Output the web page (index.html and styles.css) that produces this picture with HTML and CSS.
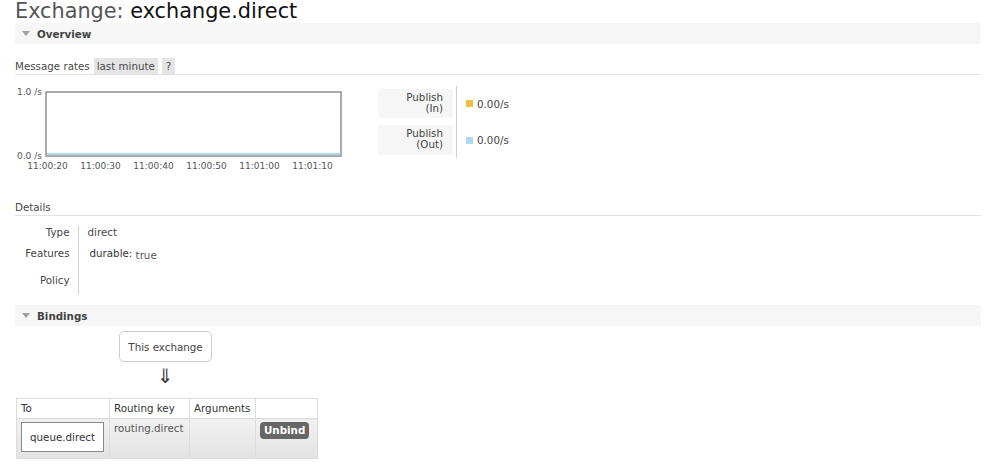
FILE: index.html
```html
<!DOCTYPE html>
<html lang="en">
<head>
<meta charset="utf-8">
<title>Exchange: exchange.direct</title>
<link rel="stylesheet" href="styles.css">
</head>
<body>
<h1 class="title">Exchange: <b>exchange.direct</b></h1>

<div class="section-bar"><span class="tri"></span><span>Overview</span></div>

<div class="sub-head rates-head">
  <span>Message rates</span>
  <span class="pill">last minute</span>
  <span class="pill">?</span>
</div>

<div class="rates">
  <div class="chart">
    <div class="y-labels"><span>1.0 /s</span><span>0.0 /s</span></div>
    <div class="canvas"><div class="series"></div></div>
    <div class="x-labels">
      <span>11:00:20</span><span>11:00:30</span><span>11:00:40</span>
      <span>11:00:50</span><span>11:01:00</span><span>11:01:10</span>
    </div>
  </div>
  <div class="legend">
    <div class="lcell first"><div class="lbox">Publish<br>(In)</div></div>
    <div class="lval first"><span class="sw sw-in"></span>0.00/s</div>
    <div class="lcell second"><div class="lbox">Publish<br>(Out)</div></div>
    <div class="lval second"><span class="sw sw-out"></span>0.00/s</div>
  </div>
</div>

<div class="sub-head details-head"><span>Details</span></div>

<table class="details">
  <tr class="r-type"><th>Type</th><td>direct</td></tr>
  <tr class="r-feat"><th>Features</th><td><span class="fkey">durable:</span> <abbr class="fval">true</abbr></td></tr>
  <tr class="r-pol"><th>Policy</th><td></td></tr>
</table>

<div class="section-bar bind-bar"><span class="tri"></span><span>Bindings</span></div>

<div class="this-ex">
  <div class="ex-box">This exchange</div>
  <div class="arrow">&#8659;</div>
</div>

<table class="bindings">
  <tr class="bh">
    <th class="c-to">To</th>
    <th class="c-rk">Routing key</th>
    <th class="c-args">Arguments</th>
    <th class="c-act"></th>
  </tr>
  <tr class="brow">
    <td><div class="q-box">queue.direct</div></td>
    <td class="rk">routing.direct</td>
    <td></td>
    <td class="act"><span class="btn">Unbind</span></td>
  </tr>
</table>
</body>
</html>
```

FILE: styles.css
```css
* { box-sizing: border-box; }

body {
  margin: 0;
  padding: 0 10px 0 15px;
  font-family: "DejaVu Sans", Verdana, sans-serif;
  font-size: 10.3px;
  color: #484848;
  background: #fff;
}

.title {
  margin: 0;
  font-size: 20.8px;
  line-height: 23px;
  font-weight: normal;
  color: #555;
}
.title b { font-weight: normal; color: #111; }

.section-bar {
  display: flex;
  align-items: center;
  gap: 7px;
  height: 21px;
  padding-left: 7px;
  background: #f6f6f6;
  font-weight: bold;
  color: #444;
}
.tri {
  width: 0;
  height: 0;
  border-left: 4.5px solid transparent;
  border-right: 4.5px solid transparent;
  border-top: 5px solid #a0a0a0;
}

.sub-head {
  display: flex;
  align-items: center;
  gap: 4px;
  height: 18px;
  border-bottom: 1px solid #e2e2e2;
}
.rates-head { margin-top: 13px; }
.pill {
  background: #e4e4e4;
  padding: 1px 3px;
  line-height: 14px;
}
.pill + .pill { padding: 1px 4px; }

.rates {
  display: flex;
  margin-top: 11px;
}

.chart {
  display: grid;
  grid-template-columns: 30px 297px;
  grid-template-rows: 5px 66px auto;
  width: 363px;
  font-size: 9px;
  color: #555;
}
.y-labels {
  grid-column: 1;
  grid-row: 2;
  display: flex;
  flex-direction: column;
  justify-content: space-between;
  margin: -4px 0;
  padding-left: 2px;
  line-height: 10px;
}
.canvas {
  grid-column: 2;
  grid-row: 2;
  border: 2px solid #ababab;
  display: flex;
  align-items: flex-end;
}
.series {
  flex: 1;
  height: 2px;
  background: #afd8f8;
}
.x-labels {
  grid-column: 1 / span 2;
  grid-row: 3;
  display: flex;
  padding-left: 6px;
  margin-top: 4px;
  line-height: 10px;
}
.x-labels span { width: 53px; text-align: center; }

.legend {
  display: grid;
  grid-template-columns: auto auto;
  align-self: flex-start;
}
.lcell {
  border-right: 1px solid #cfcfcf;
  padding: 3px 3px 0 0;
}
.lcell.second { padding: 7px 3px 3px 0; }
.lval {
  display: flex;
  align-items: center;
  padding-left: 9px;
  color: #444;
  white-space: nowrap;
}
.lval.first { padding-top: 3px; }
.lval.second { padding-top: 7px; padding-bottom: 3px; }
.lbox {
  width: 75px;
  height: 29px;
  padding: 3px 10px 0 0;
  background: #f6f6f6;
  border-radius: 3px;
  text-align: right;
  line-height: 11px;
  color: #444;
}
.lcell.second .lbox { height: 30px; }
.sw {
  display: inline-block;
  width: 7px;
  height: 7px;
  margin-right: 4px;
}
.sw-in { background: #edc240; }
.sw-out { background: #afd8f8; }

.details-head { margin-top: 27px; }

.details {
  border-collapse: collapse;
  margin-top: 10px;
}
.details th, .details td {
  vertical-align: top;
  padding: 0;
  line-height: 12px;
}
.details th {
  width: 63px;
  padding-right: 8px;
  text-align: right;
  font-weight: normal;
  color: #444;
  border-right: 1px solid #d0d0d0;
}
.details td { padding-left: 9px; }
.r-type th, .r-type td { height: 16px; padding-top: 0; }
.r-feat th, .r-feat td { height: 26px; padding-top: 5px; }
.r-pol th, .r-pol td { height: 26px; padding-top: 6px; }
.fkey { color: #333; margin-left: 2px; }
.fval {
  text-decoration: none;
  color: #555;
  position: relative;
  top: 2px;
  border-bottom: 1px solid #eee;
}

.bind-bar { margin-top: 11px; }

.this-ex {
  display: flex;
  flex-direction: column;
  align-items: center;
  width: 93px;
  margin: 5px 0 0 104px;
}
.ex-box {
  width: 93px;
  height: 31px;
  border: 1px solid #ccc;
  border-radius: 5px;
  display: flex;
  align-items: center;
  justify-content: center;
  color: #444;
}
.arrow {
  font-size: 20px;
  line-height: 20px;
  margin-top: 4px;
  color: #333;
}

.bindings {
  border-collapse: collapse;
  margin: 12px 0 0 1px;
}
.bindings th, .bindings td {
  border: 1px solid #dcdcdc;
  padding: 0 4px;
  text-align: left;
  vertical-align: top;
}
.bh th {
  height: 20px;
  font-weight: normal;
  color: #333;
  line-height: 19px;
}
.c-to { width: 93px; }
.c-rk { width: 80px; }
.c-args { width: 66px; }
.c-act { width: 62px; }
.brow td {
  height: 40px;
  background: linear-gradient(#f1f1f1, #e3e3e3);
}
.brow td.rk { padding-top: 3px; color: #555; }
.brow td.act { padding: 3px 4px 0; }
.q-box {
  margin-top: 3px;
  width: 83px;
  height: 30px;
  background: #fff;
  border: 1px solid #8a8a8a;
  display: flex;
  align-items: center;
  justify-content: center;
  color: #333;
}
.btn {
  display: inline-block;
  background: #666;
  color: #fff;
  font-weight: bold;
  border-radius: 4px;
  padding: 0 4px;
  line-height: 17px;
}
```
